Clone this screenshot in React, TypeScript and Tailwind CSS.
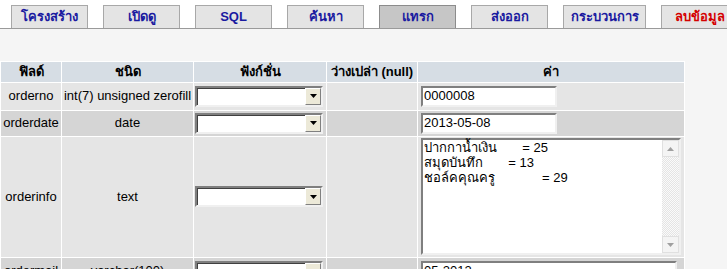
import React from "react";

const tabs = [
  { label: "โครงสร้าง", width: "w-[77px]", active: false, danger: false },
  { label: "เปิดดู", width: "w-[77px]", active: false, danger: false },
  { label: "SQL", width: "w-[77px]", active: false, danger: false },
  { label: "ค้นหา", width: "w-[77px]", active: false, danger: false },
  { label: "แทรก", width: "w-[77px]", active: true, danger: false },
  { label: "ส่งออก", width: "w-[77px]", active: false, danger: false },
  { label: "กระบวนการ", width: "w-[83px]", active: false, danger: false },
  { label: "ลบข้อมูล", width: "w-[77px]", active: false, danger: true },
];

function FakeSelect() {
  return (
    <div className="flex h-[21px] w-[128px] border-2 border-t-[#7f7f7f] border-l-[#7f7f7f] border-b-[#f0f0f0] border-r-[#f0f0f0] bg-white">
      <div className="flex-1 border-t border-l border-[#404040]" />
      <div className="flex w-[16px] items-center justify-center border border-t-white border-l-white border-b-[#808080] border-r-[#808080] bg-[#ece9d8]">
        <svg width="7" height="4" viewBox="0 0 7 4">
          <path d="M0 0h7L3.5 4z" fill="#000" />
        </svg>
      </div>
    </div>
  );
}

function FakeInput({ value, wide }: { value: string; wide?: boolean }) {
  return (
    <div
      className={`flex h-[21px] items-center border-2 border-t-[#7f7f7f] border-l-[#7f7f7f] border-b-[#f0f0f0] border-r-[#f0f0f0] bg-white pl-px ${
        wide ? "w-[256px]" : "w-[136px]"
      }`}
    >
      {value}
    </div>
  );
}

function FakeTextarea() {
  return (
    <div className="flex h-[117px] w-[260px] border-2 border-t-[#7f7f7f] border-l-[#7f7f7f] border-b-[#f0f0f0] border-r-[#f0f0f0] bg-white">
      <div className="flex-1 whitespace-pre pl-px leading-[15px]">
        {"ปากกาน้ำเงิน       = 25\nสมุดบันทึก       = 13\nชอล์คคุณครู             = 29"}
      </div>
      <div className="flex w-[17px] flex-col bg-[#f0f0f0] bg-[repeating-conic-gradient(#e4e4e4_0%_25%,#fafafa_0%_50%)] bg-[length:2px_2px]">
        <div className="flex h-[17px] items-center justify-center border border-[#e0e0e0] bg-[#f4f4f4]">
          <svg width="7" height="4" viewBox="0 0 7 4">
            <path d="M0 4h7L3.5 0z" fill="#a0a0a0" />
          </svg>
        </div>
        <div className="flex-1" />
        <div className="flex h-[17px] items-center justify-center border border-[#e0e0e0] bg-[#f4f4f4]">
          <svg width="7" height="4" viewBox="0 0 7 4">
            <path d="M0 0h7L3.5 4z" fill="#a0a0a0" />
          </svg>
        </div>
      </div>
    </div>
  );
}

const rows = [
  { field: "orderno", type: "int(7) unsigned zerofill", value: "0000008", height: "h-[27px]", bg: "bg-[#e5e5e5]" },
  { field: "orderdate", type: "date", value: "2013-05-08", height: "h-[25px]", bg: "bg-[#d5d5d5]" },
  { field: "orderinfo", type: "text", value: "", height: "h-[120px]", bg: "bg-[#e5e5e5]", area: true },
  { field: "ordermail", type: "varchar(100)", value: "05-2012", height: "h-[27px]", bg: "bg-[#d5d5d5]", wide: true },
];

export default function App() {
  return (
    <div className="h-[269px] w-[727px] overflow-hidden bg-[#f5f5f5] font-['Liberation_Sans',Tahoma,sans-serif] text-[13px] text-black">
      {/* Tabs */}
      <div className="flex h-[29px] items-end gap-[15px] border-b border-[#9a9a9a] bg-white pl-[11px]">
        {tabs.map((t) => (
          <div
            key={t.label}
            className={`flex h-[23px] shrink-0 items-center justify-center border border-b-0 font-bold ${t.width} ${
              t.active ? "border-[#8c8c8c] bg-[#c6c6c6]" : "border-[#a8a8a8] bg-[#e4e4e4]"
            } ${t.danger ? "text-[#d40000]" : "text-[#1a1aa0]"}`}
          >
            {t.label}
          </div>
        ))}
      </div>

      <div className="h-[32px]" />

      {/* Insert table */}
      <table className="table-fixed border-separate border-spacing-[1px] bg-white">
        <thead>
          <tr className="h-[18px] bg-[#d6dde4] font-bold">
            <th className="w-[60px] p-0">ฟิลด์</th>
            <th className="w-[131px] p-0">ชนิด</th>
            <th className="w-[132px] p-0">ฟังก์ชั่น</th>
            <th className="w-[90px] whitespace-nowrap p-0">ว่างเปล่า (null)</th>
            <th className="w-[266px] p-0">ค่า</th>
          </tr>
        </thead>
        <tbody>
          {rows.map((r) => (
            <tr key={r.field} className={`${r.height} ${r.bg}`}>
              <td className="whitespace-nowrap p-0 text-center">{r.field}</td>
              <td className="whitespace-nowrap p-0 text-center">{r.type}</td>
              <td className="p-0 pl-px">
                <FakeSelect />
              </td>
              <td className="p-0" />
              <td className="p-0 pl-[3px]">
                {r.area ? <FakeTextarea /> : <FakeInput value={r.value} wide={r.wide} />}
              </td>
            </tr>
          ))}
        </tbody>
      </table>
    </div>
  );
}
